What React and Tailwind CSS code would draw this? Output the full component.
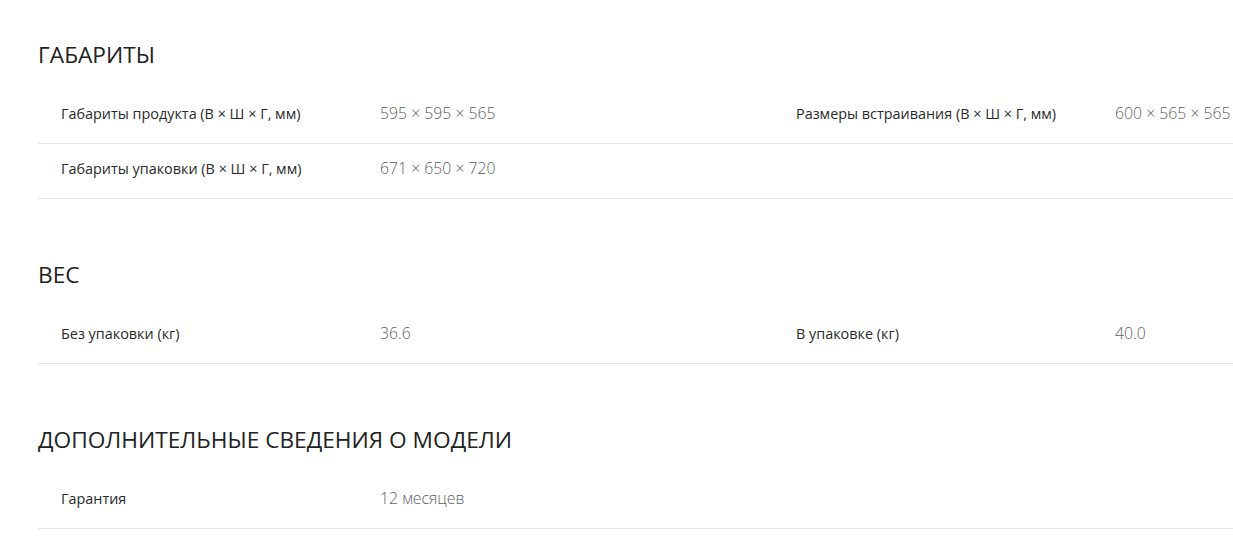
import React from 'react';

const sections = [
  {
    title: 'ГАБАРИТЫ',
    rows: [
      [
        ['Габариты продукта (В × Ш × Г, мм)', '595 × 595 × 565'],
        ['Размеры встраивания (В × Ш × Г, мм)', '600 × 565 × 565'],
      ],
      [['Габариты упаковки (В × Ш × Г, мм)', '671 × 650 × 720']],
    ],
  },
  {
    title: 'ВЕС',
    rows: [
      [
        ['Без упаковки (кг)', '36.6'],
        ['В упаковке (кг)', '40.0'],
      ],
    ],
  },
  {
    title: 'ДОПОЛНИТЕЛЬНЫЕ СВЕДЕНИЯ О МОДЕЛИ',
    rows: [[['Гарантия', '12 месяцев']]],
  },
];

const Spec = ({ label, value }) => (
  <div className="flex items-center pl-[23px]">
    <div className="w-[319px] shrink-0 text-[14.4px] font-medium text-[#2a2a2a]">{label}</div>
    <div className="text-[15.8px] font-light text-[#5e5e5e]">{value}</div>
  </div>
);

export default function App() {
  return (
    <div className="min-h-screen overflow-hidden bg-white" style={{ fontFamily: '"Open Sans", "Noto Sans", sans-serif' }}>
      <div className="w-[1470px] ml-[38px] pt-[39px] flex flex-col gap-[60px]">
        {sections.map((section) => (
          <section key={section.title}>
            <h2 className="text-[22.7px] leading-[32px] font-normal text-[#222] mb-[18px]">{section.title}</h2>
            {section.rows.map((row, i) => (
              <div key={i} className="grid grid-cols-2 h-[55px] pb-[4px] border-b border-[#e4e4e4] items-center">
                {row.map(([label, value]) => (
                  <Spec key={label} label={label} value={value} />
                ))}
              </div>
            ))}
          </section>
        ))}
      </div>
    </div>
  );
}
